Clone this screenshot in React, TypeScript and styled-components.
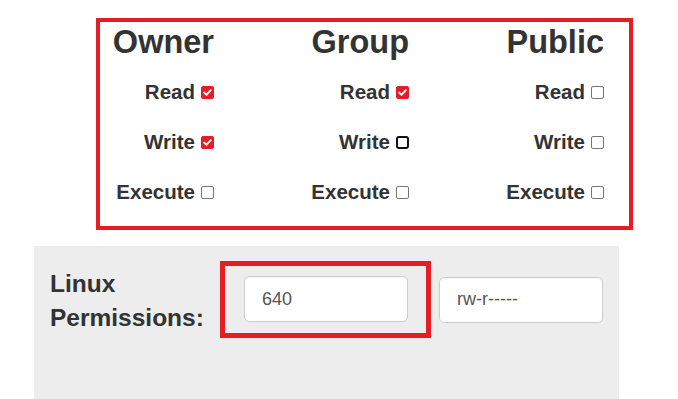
import * as React from 'react';
import styled, { createGlobalStyle } from 'styled-components';

type Perm = { label: string; checked: boolean; focused?: boolean };

const columns: { title: string; perms: Perm[] }[] = [
  {
    title: 'Owner',
    perms: [
      { label: 'Read', checked: true },
      { label: 'Write', checked: true },
      { label: 'Execute', checked: false },
    ],
  },
  {
    title: 'Group',
    perms: [
      { label: 'Read', checked: true },
      { label: 'Write', checked: false, focused: true },
      { label: 'Execute', checked: false },
    ],
  },
  {
    title: 'Public',
    perms: [
      { label: 'Read', checked: false },
      { label: 'Write', checked: false },
      { label: 'Execute', checked: false },
    ],
  },
];

function Checkbox({ checked, focused }: { checked: boolean; focused?: boolean }) {
  return (
    <S.Box $checked={checked} $focused={focused}>
      {checked && (
        <svg width="11" height="11" viewBox="0 0 11 11">
          <polyline
            points="2.2,5.6 4.5,7.9 8.8,3.2"
            fill="none"
            stroke="#fff"
            strokeWidth="1.9"
            strokeLinecap="round"
            strokeLinejoin="round"
          />
        </svg>
      )}
    </S.Box>
  );
}

export default function App() {
  return (
    <>
      <GlobalStyle />
      <S.Page>
        <S.Chmod>
          {columns.map((col) => (
            <S.Column key={col.title}>
              <S.Title>{col.title}</S.Title>
              {col.perms.map((p) => (
                <S.PermRow key={p.label}>
                  <span>{p.label}</span>
                  <Checkbox checked={p.checked} focused={p.focused} />
                </S.PermRow>
              ))}
            </S.Column>
          ))}
        </S.Chmod>
        <S.Panel>
          <S.FormRow>
            <S.Label>
              Linux
              <br />
              Permissions:
            </S.Label>
            <S.Highlight>
              <S.Field readOnly value="640" />
            </S.Highlight>
            <S.Field readOnly value="rw-r-----" />
          </S.FormRow>
        </S.Panel>
      </S.Page>
    </>
  );
}

const GlobalStyle = createGlobalStyle`
  html, body {
    margin: 0;
    background: #fff;
    overflow: hidden;
  }
  body {
    font-family: "Liberation Sans", Arial, Helvetica, sans-serif;
    color: #333;
  }
`;

const red = '#e41e24';

const S = {
  Page: styled.div`
    padding: 18px 0 0 34px;
  `,
  Chmod: styled.div`
    margin-left: 62px;
    width: 537px;
    box-sizing: border-box;
    border: 4px solid ${red};
    padding: 0 25px 9px 0;
    display: grid;
    grid-template-columns: 114px 195px 195px;
  `,
  Column: styled.div`
    display: flex;
    flex-direction: column;
    align-items: flex-end;
  `,
  Title: styled.h2`
    margin: 0 0 4px;
    font-size: 32.5px;
    line-height: 41px;
    font-weight: bold;
    white-space: nowrap;
  `,
  PermRow: styled.label`
    height: 50px;
    display: flex;
    align-items: center;
    gap: 6px;
    font-size: 20.5px;
    font-weight: bold;
    white-space: nowrap;
  `,
  Box: styled.span<{ $checked: boolean; $focused?: boolean }>`
    width: 13px;
    height: 13px;
    box-sizing: border-box;
    display: flex;
    align-items: center;
    justify-content: center;
    margin-top: 1px;
    background: ${(p) => (p.$checked ? red : '#fff')};
    border: ${(p) =>
      p.$checked
        ? `1px solid ${red}`
        : p.$focused
          ? '2.5px solid #111'
          : '1px solid #767676'};
    border-radius: ${(p) => (p.$focused ? '3px' : '2px')};
  `,
  Panel: styled.div`
    margin-top: 16px;
    width: 585px;
    height: 153px;
    box-sizing: border-box;
    background: #ededed;
    padding: 15px 16px 0;
  `,
  FormRow: styled.div`
    display: flex;
    align-items: center;
  `,
  Label: styled.div`
    align-self: flex-start;
    width: 170px;
    margin-top: 6px;
    font-size: 24.5px;
    line-height: 34px;
    font-weight: bold;
    color: #333;
  `,
  Highlight: styled.div`
    width: 211px;
    box-sizing: border-box;
    border: 5px solid ${red};
    padding: 10px 17px 11px 19px;
    margin-right: 8px;
  `,
  Field: styled.input`
    width: 164px;
    height: 46px;
    box-sizing: border-box;
    border: 1px solid #ccc;
    border-radius: 5px;
    background: #fff;
    padding: 0 0 0 17px;
    margin: 0;
    font-family: "Liberation Sans", Arial, sans-serif;
    font-size: 18px;
    color: #555;
    outline: none;
    box-shadow: inset 0 1px 1px rgba(0, 0, 0, 0.04);
  `,
};
